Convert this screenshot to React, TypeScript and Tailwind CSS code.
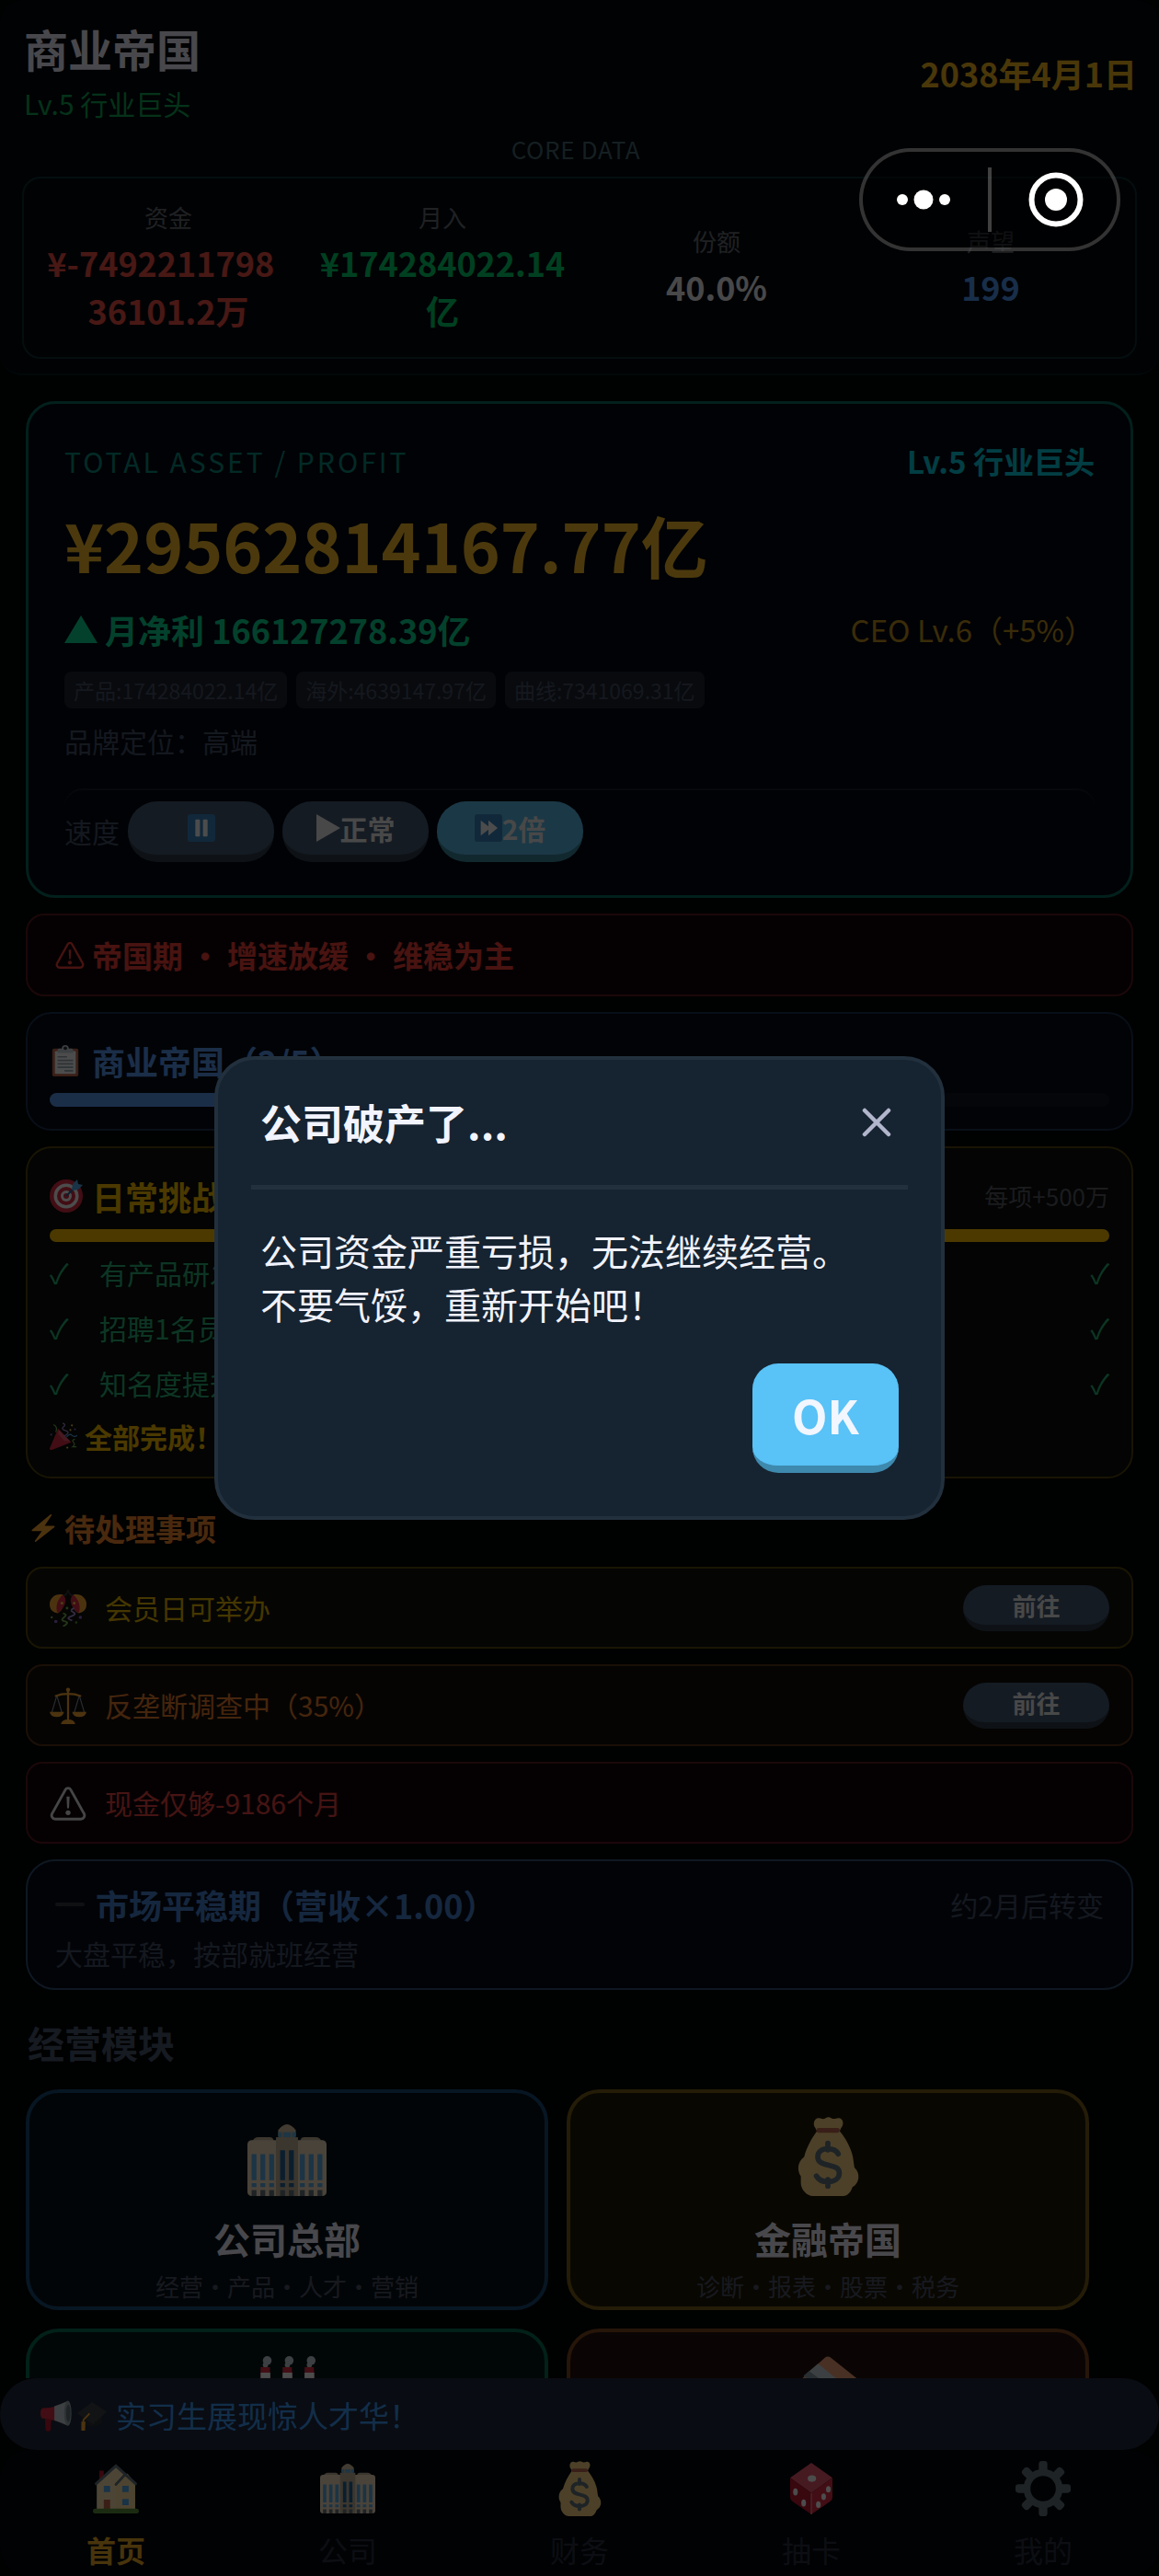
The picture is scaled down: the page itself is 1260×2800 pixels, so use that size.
import type { ReactNode } from "react";

interface IconProps {
  className: string;
}

function WarningIcon({ className }: IconProps) {
  return (
    <svg viewBox="0 0 36 36" className={className} fill="none" aria-hidden="true">
      <path
        d="M15.4 4.800 2.500 28a3.600 3.600 0 0 0 3.100 5.500h24.800a3.600 3.600 0 0 0 3.100-5.500L20.600 4.800a3 3 0 0 0-5.200 0Z"
        stroke="currentColor"
        strokeWidth="2.600"
      />
      <path d="M16.500 11.500h3l-.6 11.500h-1.800z" fill="currentColor" />
      <circle cx="18" cy="27.300" r="2.400" fill="currentColor" />
    </svg>
  );
}

function PauseIcon({ className }: IconProps) {
  return (
    <svg viewBox="0 0 36 36" className={className} aria-hidden="true">
      <rect width="36" height="36" rx="4" fill="#3B88C3" />
      <rect x="10" y="7" width="6" height="22" rx="1" fill="#fff" />
      <rect x="20" y="7" width="6" height="22" rx="1" fill="#fff" />
    </svg>
  );
}

function ForwardIcon({ className }: IconProps) {
  return (
    <svg viewBox="0 0 36 36" className={className} aria-hidden="true">
      <rect width="36" height="36" rx="4" fill="#3B88C3" />
      <path d="M8 8v20l10-8v8l12-10L18 8v8z" fill="#fff" />
    </svg>
  );
}

function ClipboardIcon({ className }: IconProps) {
  return (
    <svg viewBox="0 0 36 36" className={className} aria-hidden="true">
      <rect x="3" y="4" width="30" height="32" rx="2" fill="#C1694F" />
      <rect x="6" y="7" width="24" height="26" rx="1" fill="#fff" />
      <path d="M9 9V6a2 2 0 0 1 2-2h3a4 4 0 0 1 8 0h3a2 2 0 0 1 2 2v3z" fill="#CCD6DD" />
      <circle cx="18" cy="3.500" r="2" fill="#292F33" />
      <path
        d="M9 13.500h11M9 17.500h18M9 21.500h18M9 25.500h18M17 29.500h10"
        stroke="#99AAB5"
        strokeWidth="1.800"
      />
    </svg>
  );
}

function TargetIcon({ className }: IconProps) {
  return (
    <svg viewBox="0 0 36 36" className={className} aria-hidden="true">
      <circle cx="18" cy="18" r="18" fill="#DD2E44" />
      <circle cx="18" cy="18" r="13.500" fill="#fff" />
      <circle cx="18" cy="18" r="10" fill="#DD2E44" />
      <circle cx="18" cy="18" r="6" fill="#fff" />
      <circle cx="18" cy="18" r="3" fill="#DD2E44" />
      <path d="M18 18 29 7" stroke="#226699" strokeWidth="2" />
      <path d="m24 11 1-6 5-5 1 5 5 1-5 5-6 1z" fill="#55ACEE" />
    </svg>
  );
}

function PopperIcon({ className }: IconProps) {
  return (
    <svg viewBox="0 0 36 36" className={className} aria-hidden="true">
      <path d="M1 36Q0 36 0 34L11 8l17 18L3 36z" fill="#DD2E44" />
      <path d="m12 10 15 15-8-1-8-9z" fill="#EA596E" />
      <path d="M5 3q6 3 3 10" stroke="#77B255" strokeWidth="1.500" fill="none" />
      <path d="M17 1q5 2 1 5t3 5-2 7" stroke="#AA8DD8" strokeWidth="1.500" fill="none" />
      <path d="M22 19q4-5 7-2t7 0" stroke="#55ACEE" strokeWidth="1.500" fill="none" />
      <path d="M33 22q-5 1-2 4t-1 6h5" stroke="#77B255" strokeWidth="1.500" fill="none" />
      <circle cx="29" cy="4" r="1.300" fill="#FFCC4D" />
      <circle cx="33" cy="9" r="1.300" fill="#9266CC" />
      <circle cx="27" cy="10" r="1.300" fill="#FFCC4D" />
      <circle cx="2" cy="16" r="1.300" fill="#9266CC" />
      <circle cx="23" cy="33" r="1.300" fill="#FFCC4D" />
    </svg>
  );
}

function BoltIcon({ className }: IconProps) {
  return (
    <svg viewBox="0 0 36 36" className={className} aria-hidden="true">
      <path
        d="M32.9 15.6a1 1 0 0 0-.9-.6H19.8L28.9 1.500A1 1 0 0 0 27.6.1L3.4 20.2A1 1 0 0 0 4 22h12.2L7.1 34.500a1 1 0 0 0 1.4 1.3l24.2-19.1a1 1 0 0 0 .2-1.1Z"
        fill="#FFAC33"
      />
    </svg>
  );
}

function ConfettiBallIcon({ className }: IconProps) {
  return (
    <svg viewBox="0 0 36 36" className={className} aria-hidden="true">
      <path d="M12 6q5 0 6-6 1 6 6 6" stroke="#31373D" strokeWidth="1.500" fill="none" />
      <path d="M13 5C6 3 0 8 0 14s3 8 8 9c5-3 8-10 5-18Z" fill="#FFAC33" />
      <path d="M13 5c4 4 4 10-5 18-3-4-1-14 5-18Z" fill="#DD2E44" />
      <path d="M23 5c7-2 13 3 13 9s-3 8-8 9c-5-3-8-10-5-18Z" fill="#FFAC33" />
      <path d="M23 5c-4 4-4 10 5 18 3-4 1-14-5-18Z" fill="#DD2E44" />
      <path d="M13 23q5 1 1 4t1 4-2 5" stroke="#77B255" strokeWidth="1.700" fill="none" />
      <path d="M24 18q-5 2-1 4t-2 4 1 4" stroke="#AA8DD8" strokeWidth="1.700" fill="none" />
      <circle cx="17" cy="18" r="1.300" fill="#77B255" />
      <circle cx="30" cy="27" r="1.600" fill="#9266CC" />
      <circle cx="6" cy="31" r="1.600" fill="#9266CC" />
      <circle cx="2" cy="27" r="1.100" fill="#77B255" />
      <circle cx="26" cy="32" r="1.200" fill="#5C913B" />
      <circle cx="12" cy="13" r="1.400" fill="#FFCC4D" />
      <circle cx="24" cy="13" r="1.400" fill="#FFCC4D" />
    </svg>
  );
}

function ScalesIcon({ className }: IconProps) {
  return (
    <svg viewBox="0 0 36 36" className={className} aria-hidden="true">
      <path d="M7 8 2 25M7 8l5 17M29 8l-5 17M29 8l5 17" stroke="#8899A6" strokeWidth="1" />
      <path
        d="M6 8.500q5-2 12-2t12 2"
        stroke="#FFAC33"
        strokeWidth="2"
        fill="none"
        strokeLinecap="round"
      />
      <rect x="17" y="2" width="2" height="31" fill="#FFAC33" />
      <circle cx="18" cy="2.500" r="2" fill="#FFAC33" />
      <path d="M0 24h14q-1 5-7 5t-7-5ZM22 24h14q-1 5-7 5t-7-5ZM11 36q1-4.500 7-4.500t7 4.500z" fill="#FFAC33" />
    </svg>
  );
}

function BuildingIcon({ className }: IconProps) {
  return (
    <svg viewBox="0 0 36 36" preserveAspectRatio="none" className={className} aria-hidden="true">
      <path d="M2 9q1-2.500 3-2.500h5q2 0 2 2.500zM24 9q0-2.500 2-2.500h5q2 0 3 2.500z" fill="#C6B59A" />
      <rect y="8" width="36" height="28" rx="2" fill="#F3DFC1" />
      <path d="M14 6V3q2-3 4-3t4 3v3z" fill="#D9C5A6" />
      <rect x="14" y="4" width="8" height="3" fill="#66B5E8" />
      <rect x="13" y="6.500" width="10" height="29.500" fill="#C6B59A" />
      <path d="M16 4v3M20 4v3" stroke="#C6B59A" strokeWidth="0.700" />
      <path
        d="M3 15v13M7 15v13M11 15v13M25 15v13M29 15v13M33 15v13M3 29.500v2M7 29.500v2M11 29.500v2M25 29.500v2M29 29.500v2M33 29.500v2"
        stroke="#5DADEC"
        strokeWidth="2.200"
      />
      <path d="M16 13v15M20 13v15M16 29.500v2M20 29.500v2" stroke="#226699" strokeWidth="2.200" />
      <path
        d="M3 33v3M7 33v3M11 33v3M16 33v3M20 33v3M25 33v3M29 33v3M33 33v3"
        stroke="#66757F"
        strokeWidth="2.200"
      />
    </svg>
  );
}

function MoneyBagIcon({ className }: IconProps) {
  return (
    <svg viewBox="0 0 36 36" className={className} aria-hidden="true">
      <path
        d="M13 6.500 12.300 5C11 3.500 11.700.3 14 .5c1 .2 2 .8 3 0 .8-.5 1.700-.5 2.500 0 1 .7 2.200.2 3.200 0C25 .3 25.600 3.500 24 5l-.6 1.500c3 3.500 5.300 8.200 6 11.800.3 1.700.4 3 .7 4.700 2.800 2.500 2.400 7.200-.9 8.900-.7 2.200-2.200 4.100-4.200 4.100H11.200C8.500 36 5.700 33 5.700 30v-3C4 24.500 4 20.500 7.200 18.200 8.500 13.500 10.500 10 13 6.500Z"
        fill="#FDD888"
      />
      <rect x="12.800" y="5" width="10.600" height="2.200" rx="1" fill="#BF6952" />
      <path
        d="M18 12v3M18 28.500v3M22.700 16.800c-.9-1.700-2.700-2.300-4.700-2.300-3 0-4.600 1.500-4.600 3.700 0 5 9.800 2.500 9.800 7.300 0 2.500-2.200 4-5.200 4-2.500 0-4.300-1-5.200-2.600"
        stroke="#67757F"
        strokeWidth="2.400"
        fill="none"
        strokeLinecap="round"
      />
    </svg>
  );
}

function FactoryIcon({ className }: IconProps) {
  return (
    <svg viewBox="0 0 36 36" className={className} aria-hidden="true">
      {[6, 16, 26].map((x) => (
        <g key={x} transform={`translate(${x} 0)`}>
          <circle cx="3" cy="2" r="2" fill="#CCD6DD" />
          <circle cx="2.200" cy="4" r="1.200" fill="#CCD6DD" />
          <path d="M0 5h4.200l.8 17h-5z" fill="#DD2E44" />
          <path d="M0 7.500h4.400v2.500H0z" fill="#fff" />
        </g>
      ))}
      <path d="M0 20 12 14v6l12-6v6l12-6v22H0z" fill="#99AAB5" />
    </svg>
  );
}

function CardIcon({ className }: IconProps) {
  return (
    <svg viewBox="0 0 36 36" className={className} aria-hidden="true">
      <path d="M16.500.8q1.500-1.200 3 0L36 14 19 33 0 16z" fill="#F4A078" />
      <path d="M13.500 3.500 33 19l-4 4.500L7 9z" fill="#CCD6DD" />
      <path d="m9.500 6.800 20.500 15.500-2 2L7 9z" fill="#8899A6" />
    </svg>
  );
}

function MegaphoneIcon({ className }: IconProps) {
  return (
    <svg viewBox="0 0 36 36" className={className} aria-hidden="true">
      <path d="M5 19h9l-2 7v8q-2 3-6 1z" fill="#BE1931" />
      <path d="M3 9q8 0 15-2v17q-7-3-15-3c-4 0-4-12 0-12Z" fill="#DD2E44" />
      <path d="M16 7q8-3 15-6v28q-7-3-15-6z" fill="#CCD6DD" />
      <ellipse cx="31.500" cy="15" rx="4.200" ry="14.500" fill="#99AAB5" />
      <ellipse cx="32" cy="15" rx="2.500" ry="10" fill="#66757F" />
    </svg>
  );
}

function GraduationIcon({ className }: IconProps) {
  return (
    <svg viewBox="0 0 36 36" className={className} aria-hidden="true">
      <path d="M5 15v12q10 8 25 0V14z" fill="#292F33" />
      <path d="M18 1 36 13 19 28 0 15z" fill="#3B4247" />
      <path d="M15 15 7.500 23v4" stroke="#FFAC33" strokeWidth="2" fill="none" />
      <path d="M5 25h5l-.5 11H5z" fill="#FFAC33" />
    </svg>
  );
}

function HouseIcon({ className }: IconProps) {
  return (
    <svg viewBox="0 0 36 36" preserveAspectRatio="none" className={className} aria-hidden="true">
      <path d="M5 5h3.500v8H5z" fill="#BE1931" />
      <path d="M3 14 18 1l15 13v19H3z" fill="#FFE8B6" />
      <path d="m18 16 9-9 6 7v19H18z" fill="#FFE1A0" />
      <path
        d="M2.500 14.500 18 1.500l15.500 13M18 15l7.500-7.500"
        stroke="#66757F"
        strokeWidth="2"
        fill="none"
        strokeLinecap="round"
      />
      <path d="M8.500 16h5v4.500h-5zM23 16h5v4.500h-5zM23 25.500h5v4.500h-5z" fill="#55ACEE" />
      <path d="M8.500 26h5v7h-5z" fill="#C1694F" />
      <rect y="32.500" width="36" height="3.500" rx="1.700" fill="#5C913B" />
    </svg>
  );
}

function DiceIcon({ className }: IconProps) {
  return (
    <svg viewBox="0 0 36 36" preserveAspectRatio="none" className={className} aria-hidden="true">
      <path d="M18 0 36 10.500 18 21 0 10.500z" fill="#EA596E" />
      <path d="M0 10.500 18 21v15L2 27q-2-1-2-3z" fill="#BE1931" />
      <path d="M36 10.500 18 21v15l16-9q2-1 2-3z" fill="#DD2E44" />
      <path d="M18 21v15" stroke="#F4ABBA" strokeWidth="0.800" />
      <ellipse cx="18.500" cy="11" rx="3.600" ry="2.300" fill="#fff" />
      <ellipse cx="4.500" cy="20.300" rx="2" ry="2.500" fill="#fff" />
      <ellipse cx="11.500" cy="28" rx="2" ry="2.500" fill="#fff" />
      <ellipse cx="32.500" cy="18.500" rx="2" ry="2.300" fill="#fff" />
      <ellipse cx="28.500" cy="23.700" rx="2" ry="2.300" fill="#fff" />
      <ellipse cx="24" cy="29.200" rx="2" ry="2.300" fill="#fff" />
    </svg>
  );
}

function GearIcon({ className }: IconProps) {
  return (
    <svg viewBox="0 0 36 36" className={className} aria-hidden="true">
      <g fill="#66757F">
        {[0, 45, 90, 135].map((deg) => (
          <rect
            key={deg}
            x="15.200"
            y="0"
            width="5.600"
            height="36"
            rx="2"
            transform={`rotate(${deg} 18 18)`}
          />
        ))}
        <circle cx="18" cy="18" r="12.800" />
      </g>
      <circle cx="18" cy="18" r="8.300" fill="#04070f" />
    </svg>
  );
}

const stats = [
  { label: "资金", value: "¥-7492211798\u00a0\u00a0\n36101.2万", color: "text-[#f05048]" },
  { label: "月入", value: "¥174284022.14\n亿", color: "text-[#00d66f]" },
  { label: "份额", value: "40.0%", color: "text-[#f0f0f5]" },
  { label: "声望", value: "199", color: "text-[#5299f5]" },
];

const chips = ["产品:174284022.14亿", "海外:4639147.97亿", "曲线:7341069.31亿"];

const challenges = ["有产品研发中", "招聘1名员工", "知名度提升"];

const todos = [
  {
    text: "会员日可举办",
    box: "border-[#54460a] bg-[#13120e]",
    color: "text-[#e6b800]",
    icon: <ConfettiBallIcon className="size-10" />,
    action: true,
  },
  {
    text: "反垄断调查中（35%）",
    box: "border-[#583416] bg-[#13100c]",
    color: "text-[#e67e2e]",
    icon: <ScalesIcon className="size-10" />,
    action: true,
  },
  {
    text: "现金仅够-9186个月",
    box: "border-[#5a1a20] bg-[#12060c]",
    color: "text-[#e64540]",
    icon: <WarningIcon className="size-10 text-[#e8e8e8]" />,
    action: false,
  },
];

const modules = [
  {
    id: "company",
    title: "公司总部",
    desc: "经营・产品・人才・营销",
    box: "border-[#1a4a75] bg-[#081119]",
    icon: <BuildingIcon className="h-[78px] w-[86px]" />,
  },
  {
    id: "finance",
    title: "金融帝国",
    desc: "诊断・报表・股票・税务",
    box: "border-[#786018] bg-[#1e1909]",
    icon: <MoneyBagIcon className="size-[86px]" />,
  },
  {
    id: "industry",
    box: "border-[#086e52] bg-[#05181a]",
    icon: <FactoryIcon className="size-[86px]" />,
  },
  {
    id: "cards",
    box: "border-[#80481e] bg-[#241110]",
    icon: <CardIcon className="size-[86px]" />,
  },
];

const tabs = [
  { label: "首页", active: true, icon: <HouseIcon className="h-[54px] w-[50px]" /> },
  { label: "公司", active: false, icon: <BuildingIcon className="h-[54px] w-[60px]" /> },
  { label: "财务", active: false, icon: <MoneyBagIcon className="size-[60px]" /> },
  { label: "抽卡", active: false, icon: <DiceIcon className="h-[56px] w-[46px]" /> },
  { label: "我的", active: false, icon: <GearIcon className="size-[60px]" /> },
];

function PillButton({ active = false, children }: { active?: boolean; children: ReactNode }) {
  return (
    <button
      type="button"
      className={`flex h-[66px] w-[159px] items-center justify-center rounded-[32px] border-b-8 text-[30px] font-bold text-[#f0f0f0] ${
        active ? "border-[#3c879f] bg-[#5abde9]" : "border-[#2f3d4b] bg-[#435a76]"
      }`}>
      {children}
    </button>
  );
}

function Header() {
  return (
    <header className="rounded-3xl border-b-2 border-[#061b20] bg-[#04070f] px-6 pt-6 pb-4">
      <div className="flex items-center justify-between pl-[2px]">
        <div>
          <h1 className="text-[48px] leading-[56px] font-bold text-[#f0f2ff]">商业帝国</h1>
          <p className="mt-[10px] text-[30px] leading-[44px] text-[#11a854]">Lv.5 行业巨头</p>
        </div>
        <time className="text-[36px] leading-[52px] font-bold text-[#f5b920]">2038年4月1日</time>
      </div>
      <p className="mt-[10px] pr-2 text-center text-[26px] leading-[36px] tracking-wide text-[#466870]">
        CORE DATA
      </p>
      <div className="mt-3 grid grid-cols-4 items-center rounded-[20px] border-2 border-[#0f3132] bg-[#06090f] px-2 pt-[23px] pb-[25px]">
        {stats.map((stat) => (
          <div key={stat.label} className="text-center">
            <p className="text-[26px] leading-[38px] text-[#6a6f76]">{stat.label}</p>
            <p className={`mt-1 text-[36px] leading-[52px] font-bold whitespace-pre-line ${stat.color}`}>
              {stat.value}
            </p>
          </div>
        ))}
      </div>
    </header>
  );
}

function AssetCard() {
  return (
    <section className="rounded-[32px] border-3 border-[#096b5f] bg-[#050912] px-[39px] pt-[38px] pb-[36px]">
      <div className="flex items-center justify-between">
        <h2 className="text-[30px] leading-[48px] tracking-widest text-[#0b8c80]">
          TOTAL ASSET / PROFIT
        </h2>
        <span className="text-[33px] leading-[48px] font-bold text-[#08cfe0]">Lv.5 行业巨头</span>
      </div>
      <p className="mt-3 text-[73px] leading-[108px] font-bold text-[#fac02c]">
        ¥29562814167.77亿
      </p>
      <div className="mt-[13px] flex items-center justify-between">
        <p className="flex items-center gap-2 text-[36px] leading-[52px] font-bold text-[#0cda94]">
          <svg viewBox="0 0 36 30" className="w-9" aria-hidden="true">
            <path d="M18 0 36 30H0z" fill="currentColor" />
          </svg>
          月净利 166127278.39亿
        </p>
        <span className="text-[33px] leading-[52px] text-[#c39320]">CEO Lv.6（+5%）</span>
      </div>
      <div className="mt-5 flex gap-[10px]">
        {chips.map((chip) => (
          <span
            key={chip}
            className="rounded-lg bg-[#1d2430] px-[10px] text-[23px] leading-[40px] text-[#485064]">
            {chip}
          </span>
        ))}
      </div>
      <p className="mt-[13px] text-[30px] leading-[44px] text-[#435068]">品牌定位：高端</p>
      <div className="mt-[30px] flex items-start gap-[9px] rounded-[20px] border-t-2 border-[#151b26] pt-3">
        <span className="pt-[10px] text-[30px] leading-[44px] text-[#435068]">速度</span>
        <PillButton>
          <PauseIcon className="size-[30px]" />
        </PillButton>
        <PillButton>
          <svg viewBox="0 0 26 30" className="w-[26px]" aria-hidden="true">
            <path d="M0 0 26 15 0 30z" fill="currentColor" />
          </svg>
          正常
        </PillButton>
        <PillButton active>
          <ForwardIcon className="size-[30px]" />
          2倍
        </PillButton>
      </div>
    </section>
  );
}

function Challenges() {
  return (
    <section className="rounded-[28px] border-2 border-[#54440e] bg-[#0b100a] px-6 pt-[26px] pb-[22px]">
      <div className="flex items-center justify-between">
        <h2 className="flex items-center gap-[10px] text-[36px] leading-[52px] font-bold text-[#fac000]">
          <TargetIcon className="size-9" />
          日常挑战
        </h2>
        <span className="text-[26px] leading-[36px] text-[#5c5c66]">每项+500万</span>
      </div>
      <div className="mt-[10px] h-[14px] rounded-full bg-[#ffc000]" />
      <ul className="mt-[3px]">
        {challenges.map((item) => (
          <li key={item} className="flex items-center text-[30px] leading-[60px] text-[#2db37a]">
            <span className="w-[54px]">✓</span>
            <span className="flex-1">{item}</span>
            <span>✓</span>
          </li>
        ))}
      </ul>
      <p className="mt-[6px] flex items-center gap-2 text-[30px] leading-[44px] font-bold text-[#fac000]">
        <PopperIcon className="size-[30px]" />
        全部完成！
      </p>
    </section>
  );
}

function Todos() {
  return (
    <section>
      <h2 className="flex items-center gap-2 pt-1 pl-1 text-[33px] leading-[66px] font-bold text-[#f58a30]">
        <BoltIcon className="size-[30px]" />
        待处理事项
      </h2>
      <ul className="mt-[9px] flex flex-col gap-[17px]">
        {todos.map((todo) => (
          <li
            key={todo.text}
            className={`flex h-[89px] items-center rounded-[18px] border-2 px-6 ${todo.box}`}>
            {todo.icon}
            <span className={`ml-5 flex-1 text-[30px] ${todo.color}`}>{todo.text}</span>
            {todo.action && (
              <button
                type="button"
                className="h-[50px] w-[159px] rounded-[25px] border-b-[7px] border-[#2f3d4b] bg-[#435a76] text-[26px] font-bold text-[#f0f0f0]">
                前往
              </button>
            )}
          </li>
        ))}
      </ul>
    </section>
  );
}

function BottomBar() {
  return (
    <div className="bg-[#020406]">
      <div className="flex h-[78px] items-center rounded-[40px] bg-[#1f2a3c] px-11 pt-1 text-[33px] text-[#3f9bf5]">
        <MegaphoneIcon className="size-[34px]" />
        <GraduationIcon className="mr-[10px] ml-[6px] size-[32px]" />
        实习生展现惊人才华！
      </div>
      <nav className="grid h-[137px] grid-cols-5 rounded-[32px] bg-[#05080f]">
        {tabs.map((tab) => (
          <a
            key={tab.label}
            href="#"
            className={`flex flex-col items-center text-[32px] ${
              tab.active ? "font-bold text-[#f0ae2a]" : "text-[#283140]"
            }`}>
            <span className="flex h-[84px] items-center">{tab.icon}</span>
            <span className="leading-[48px]">{tab.label}</span>
          </a>
        ))}
      </nav>
    </div>
  );
}

function Capsule() {
  return (
    <div className="absolute top-[161px] right-[42px] flex h-28 w-[284px] items-center rounded-full border-4 border-white/20 bg-black/50">
      <button type="button" aria-label="更多" className="flex flex-1 justify-center pr-1">
        <svg viewBox="0 0 60 22" className="w-[60px]" fill="#fff" aria-hidden="true">
          <circle cx="7" cy="11" r="6" />
          <circle cx="30" cy="11" r="10.500" />
          <circle cx="53" cy="11" r="6" />
        </svg>
      </button>
      <span className="h-[70px] w-1 bg-white/25" />
      <button type="button" aria-label="关闭" className="flex flex-1 justify-center pl-1">
        <svg viewBox="0 0 60 60" className="w-[60px]" fill="none" aria-hidden="true">
          <circle cx="30" cy="30" r="26.500" stroke="#fff" strokeWidth="6" />
          <circle cx="30" cy="30" r="12" fill="#fff" />
        </svg>
      </button>
    </div>
  );
}

function BankruptDialog() {
  return (
    <div className="absolute inset-0 flex items-center justify-center bg-black/70">
      <div
        role="dialog"
        aria-labelledby="dialog-title"
        className="w-[63%] rounded-[44px] border-4 border-[#22303d] bg-[#162330] px-9 pt-[34px] pb-[47px]">
        <div className="flex items-center justify-between border-b-[5px] border-[#22303d] px-[10px] pb-[34px]">
          <h2 id="dialog-title" className="text-[45px] leading-[68px] font-bold text-[#f2f4ff]">
            公司破产了...
          </h2>
          <button type="button" aria-label="关闭对话框" className="mr-2">
            <svg viewBox="0 0 32 32" className="w-8" aria-hidden="true">
              <path
                d="M3 3 29 29M29 3 3 29"
                stroke="#b2b6cc"
                strokeWidth="4.500"
                strokeLinecap="round"
              />
            </svg>
          </button>
        </div>
        <p className="mt-[37px] px-[10px] text-[40px] leading-[58px] text-[#f0f2fc]">
          公司资金严重亏损，无法继续经营。
          <br />
          不要气馁，重新开始吧！
        </p>
        <div className="mt-9 flex justify-end pr-[10px]">
          <button
            type="button"
            className="h-[119px] w-[159px] rounded-[28px] border-b-8 border-[#3e89ae] bg-[#59c2f6] text-[50px] font-bold text-[#f2f6ff]">
            OK
          </button>
        </div>
      </div>
    </div>
  );
}

export default function App() {
  return (
    <div className="relative flex h-screen flex-col overflow-hidden bg-[#020406] font-['Noto_Sans_CJK_SC',sans-serif]">
      <div className="min-h-0 flex-1 overflow-hidden">
        <Header />
        <main className="flex flex-col gap-[17px] px-7 pt-7">
          <AssetCard />

          <p className="flex items-center gap-2 rounded-[20px] border-2 border-[#5e1a20] bg-[#12060c] px-[30px] text-[33px] leading-[86px] font-bold text-[#f04038]">
            <WarningIcon className="size-[32px]" />
            帝国期 • 增速放缓 • 维稳为主
          </p>

          <section className="rounded-[28px] border-2 border-[#1c3250] bg-[#080c17] px-6 pt-[25px] pb-[24px]">
            <h2 className="flex items-center gap-3 text-[36px] leading-[52px] font-bold text-[#5a99f0]">
              <ClipboardIcon className="size-[34px]" />
              商业帝国（2/5）
            </h2>
            <div className="mt-[9px] h-[15px] rounded-full bg-[#0e1624]">
              <div className="h-full w-2/5 rounded-full bg-[#5a99f0]" />
            </div>
          </section>

          <Challenges />
          <Todos />

          <section className="rounded-[32px] border-2 border-[#305072] bg-[#090d1a] px-[30px] pt-[20px] pb-[16px]">
            <div className="flex items-center justify-between">
              <h2 className="flex items-center gap-3 text-[36px] leading-[54px] font-bold text-[#4682d0]">
                <span className="h-1 w-8 rounded-sm bg-[#31373d]" />
                市场平稳期（营收×1.00）
              </h2>
              <span className="text-[30px] leading-[44px] text-[#435068]">约2月后转变</span>
            </div>
            <p className="mt-1 text-[30px] leading-[44px] text-[#435068]">
              大盘平稳，按部就班经营
            </p>
          </section>

          <section>
            <h2 className="pt-3 pl-[2px] text-[40px] leading-[56px] font-bold text-[#4c586e]">
              经营模块
            </h2>
            <div className="mt-[23px] grid grid-cols-2 gap-5 pr-12">
              {modules.map((item) => (
                <a
                  key={item.id}
                  href="#"
                  className={`flex h-60 flex-col items-center rounded-[36px] border-4 pt-[26px] ${item.box}`}>
                  <span className="flex h-[86px] items-end">{item.icon}</span>
                  {item.title && (
                    <>
                      <span className="mt-[18px] text-[40px] leading-[56px] font-bold text-[#f0f2ff]">
                        {item.title}
                      </span>
                      <span className="mt-[6px] text-[26px] leading-[36px] text-[#4e566a]">
                        {item.desc}
                      </span>
                    </>
                  )}
                </a>
              ))}
            </div>
          </section>
        </main>
      </div>
      <BottomBar />
      <BankruptDialog />
      <Capsule />
    </div>
  );
}
